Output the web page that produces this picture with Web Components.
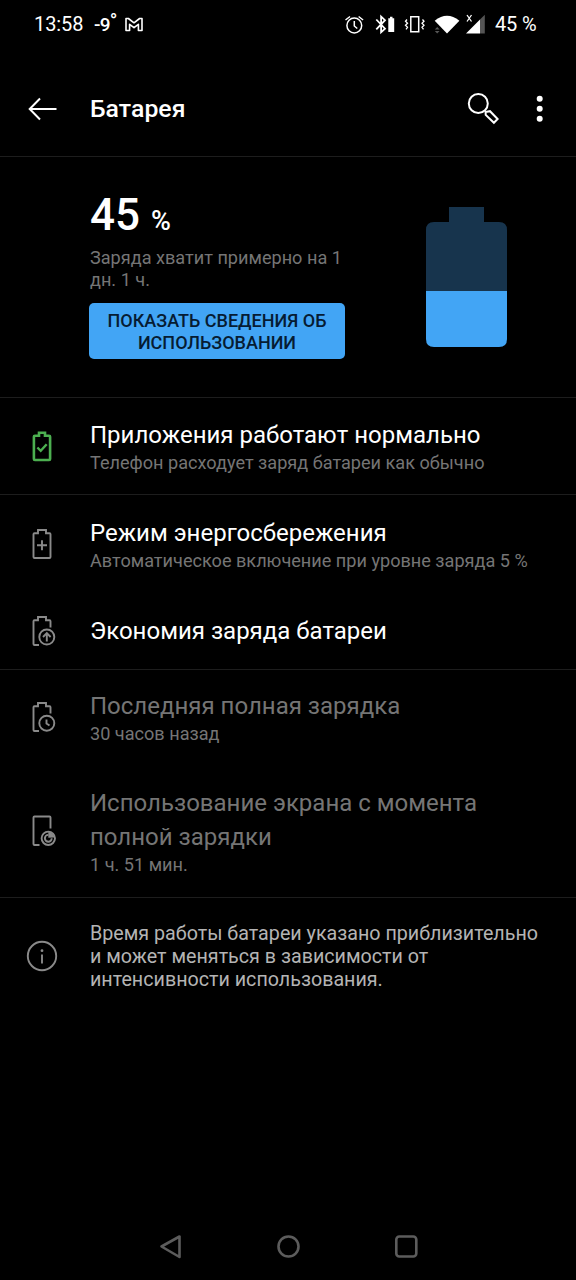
<!DOCTYPE html>
<html lang="ru"><head><meta charset="utf-8"><title>Батарея</title>
<style>
html,body{margin:0;background:#000}
body{font-family:Roboto,"Noto Sans",sans-serif;color:#fff}
</style></head><body>
<battery-screen></battery-screen>
<script>
const make=(name,css,html)=>customElements.define(name,class extends HTMLElement{
  constructor(){super();this.attachShadow({mode:'open'}).innerHTML=`<style>*{box-sizing:border-box}svg{display:block;overflow:visible}${css}</style>${html}`}
});
make('status-bar',`:host{display:flex;align-items:center;height:50px;padding:0 40px 2px 34px;font-size:20px;line-height:24px;white-space:nowrap;box-sizing:border-box}
.time{width:60px;letter-spacing:-.1px}.temp{width:30px;font-weight:500;font-size:19px;padding-top:2px;letter-spacing:-.8px}.temp sup{font-size:20px;line-height:0;vertical-align:3px}.sp{flex:1}.pct{width:41px;letter-spacing:-.15px}`,
`<span class="time">13:58</span><span class="temp">-9<sup>°</sup></span>
<svg width="20" height="16" viewBox="124 16 20 16" fill="none" stroke="#fff" stroke-width="1.6" stroke-linejoin="round"><path d="M126 18.5v12h3.6v-6.2l4.4 3.4 4.4-3.4v6.2h3.6v-12h-2.4l-5.6 4.3-5.6-4.3z"/></svg>
<span class="sp"></span>
<svg width="150" height="24" viewBox="345 12.500 150 24" fill="none" stroke="#fff" stroke-width="1.5">
<circle cx="354.300" cy="26" r="7.400"/><path d="M354.300 21.500v5l3 2.500M345.500 20.500l4.500-3.500M363.100 20.500l-4.500-3.500"/>
<path stroke-width="1.800" d="M376.300 20l8.700 9.200-3.900 3.600V17l3.900 3.700-8.700 9.200"/><path fill="#fff" stroke="none" d="M388.300 18.800h1.700v-1.600h2.500v1.600h1.700v13.600h-5.900z"/>
<path d="M410.800 17.200h7.900v15h-7.900z"/><path stroke-width="1.300" d="M407 20l-1.500 1.800 2 2-2 2 2 2-1.500 2M422.500 20l1.500 1.800-2 2 2 2-2 2 1.500 2"/>
<path fill="#fff" stroke="none" d="M434.700 21.200Q447 11.200 459.400 21.200L447 34z"/><path fill="#555" stroke="none" d="M434.800 30l2.400-2.500 2.400 2.500zM434.800 31.500l2.400 2.500 2.400-2.500z"/>
<path fill="#fff" stroke="none" d="M466 34l14-14v14z"/><path fill="#555" stroke="none" d="M480 20l4.800-4.800V34H480z"/><path stroke-width="1.300" d="M467 15.500l4.500 6.500M471.500 15.500l-4.500 6.500"/></svg><span class="pct">45 %</span>`);
make('app-bar',`:host{display:flex;align-items:center;height:107px;padding-top:12px;border-bottom:1px solid #1d1d1d;box-sizing:border-box}
.back{width:90px;padding-left:28px}h1{flex:1;margin:0;font-size:24.800px;letter-spacing:.03px;font-weight:500;line-height:32px}.find{width:61px}.more{width:47px}`,
`<div class="back"><svg width="30" height="24" viewBox="28 96.500 30 24" fill="none" stroke="#fff" stroke-width="2"><path d="M56.500 108.500H30M40 98L29.700 108.500 40 119"/></svg></div><h1><slot></slot></h1>
<div class="find"><svg width="32" height="32" viewBox="468 92.500 32 32" fill="none" stroke="#fff" stroke-width="2"><circle cx="478.300" cy="103" r="9.500"/><path d="M485.600 111.500l4.400-.8 7.600 7.800-3.700 3.800-8.200-7.900z"/></svg></div>
<div class="more"><svg width="20" height="30" viewBox="529 94 20 30" fill="#fff"><circle cx="539.700" cy="98.700" r="3"/><circle cx="539.700" cy="108.700" r="3"/><circle cx="539.700" cy="118.700" r="3"/></svg></div>`);
make('battery-summary',`:host{display:flex;height:241px;border-bottom:1px solid #1d1d1d;box-sizing:border-box;padding:32px 69px 0 89px;justify-content:space-between}
.info{width:256px}.level{height:52px;line-height:52px;font-size:44px;font-weight:500;padding-left:1px}.level small{font-size:27px}
p{margin:6px 0 0;padding-left:1px;color:#757575;font-size:18.120px;line-height:21.500px;width:256px;white-space:nowrap}
button{margin-top:13px;width:256px;height:56px;padding:1.500px 0 0;border:0;border-radius:5px;background:#42a5f5;color:#061c33;font:500 18px/21.500px Roboto,sans-serif;display:block}
svg{margin-top:18px}`,
`<div class="info"><div class="level"><span>45</span> <small>%</small></div><p>Заряда хватит примерно на 1<br>дн. 1 ч.</p><button>ПОКАЗАТЬ СВЕДЕНИЯ ОБ<br>ИСПОЛЬЗОВАНИИ</button></div>
<svg width="81" height="140" viewBox="0 0 81 140"><path fill="#17344d" d="M23 0h35v15h15q8 0 8 8v61H0V23q0-8 8-8h15z"/><path fill="#42a5f5" d="M0 84h81v48q0 8-8 8H8q-8 0-8-8z"/></svg>`);
const body='M13 32H8.500q-1 0-1-1V8.200q0-1 1-1H12V4h8v3.200h3.500q1 0 1 1v6.300';
const icons={
ok:'<g stroke="#4caf50" stroke-width="2.600"><path d="M8.900 7.800H13V4.800h6v3h4.100q1 0 1 1V31q0 1-1 1H8.900q-1 0-1-1V8.800q0-1 1-1z"/><path d="M11.400 19.500l3.300 3.300 6-6.500" stroke-width="2.400"/></g>',
plus:'<path d="M8.500 7.200H12V4h8v3.200h3.500q1 0 1 1V31q0 1-1 1h-15q-1 0-1-1V8.200q0-1 1-1zM11 19.300h10M16 14.300v10"/>',
up:`<path d="${body}"/><circle cx="20.800" cy="24" r="7.500"/><path d="M20.800 28.500v-8M17 24l3.800-3.800 3.800 3.800"/>`,
clock:`<path d="${body}"/><circle cx="20.800" cy="24.200" r="7.500"/><path d="M20.500 20.500v4l3 2"/>`,
screen:'<path d="M13.500 32h-5q-1 0-1-1V4.500q0-1 1-1h15q1 0 1 1v11"/><circle cx="22.300" cy="25.300" r="6.700"/><path d="M22.300 21.900a3.400 3.400 0 1 0 3.400 3.400"/><path fill="#8a8a8a" stroke="none" d="M22.300 19v5.800l6.200-.3q-1-5-6.200-5.500z"/>',
info:'<circle cx="16" cy="17" r="14.200"/><path d="M16 15.500v9"/><circle cx="16" cy="11.700" r="1.400" fill="#8a8a8a" stroke="none"/>'};
customElements.define('battery-icon',class extends HTMLElement{
  constructor(){super();this.attachShadow({mode:'open'})}
  connectedCallback(){this.shadowRoot.innerHTML=`<style>:host{display:block;width:32px;height:36px}svg{display:block}</style><svg width="32" height="36" viewBox="0 0 32 36" fill="none" stroke="#8a8a8a" stroke-width="1.900">${icons[this.getAttribute('name')]}</svg>`}
});
make('setting-row',`:host{display:grid;grid-template-columns:64px 1fr;align-items:center;padding-left:26px;height:var(--h,96px);box-sizing:border-box;border-bottom:var(--line,0) solid #1d1d1d}
.t{font-size:24px;line-height:34px;color:var(--tone,#fff);white-space:nowrap}::slotted([slot=sub]){display:block;font-size:18.120px;line-height:22px;color:#757575;white-space:nowrap}`,
`<slot name="icon"></slot><div><div class="t"><slot></slot></div><slot name="sub"></slot></div>`);
make('info-note',`:host{display:grid;grid-template-columns:64px 1fr;align-items:center;padding:24px 0 0 26px;font-size:19.690px;line-height:23px;color:#b4b4b4}`,
`<battery-icon name="info"></battery-icon><div><slot></slot></div>`);
make('nav-bar',`:host{display:flex;justify-content:space-between;padding:0 157px 18px 158px;margin-top:auto}`,
`<svg width="26" height="30" viewBox="158 1232 26 30" fill="none" stroke="#5c5c5c" stroke-width="2.600" stroke-linejoin="round"><path d="M161.500 1246.500l18-10v20.500z"/></svg>
<svg width="26" height="30" viewBox="275.500 1232 26 30" fill="none" stroke="#5c5c5c" stroke-width="2.600"><circle cx="288" cy="1246.500" r="10"/></svg>
<svg width="26" height="30" viewBox="393 1232 26 30" fill="none" stroke="#5c5c5c" stroke-width="2.600"><rect x="396.300" y="1236.500" width="20" height="20" rx="3"/></svg>`);
make('battery-screen',`:host{display:flex;flex-direction:column;width:576px;height:1280px;background:#000;overflow:hidden}`,
`<status-bar></status-bar><app-bar>Батарея</app-bar><battery-summary></battery-summary>
<setting-row style="--h:97px;--line:1px"><battery-icon slot="icon" name="ok"></battery-icon>Приложения работают нормально<span slot="sub">Телефон расходует заряд батареи как обычно</span></setting-row>
<setting-row style="--h:98px"><battery-icon slot="icon" name="plus"></battery-icon>Режим энергосбережения<span slot="sub">Автоматическое включение при уровне заряда 5 %</span></setting-row>
<setting-row style="--h:77px;--line:1px"><battery-icon slot="icon" name="up"></battery-icon>Экономия заряда батареи</setting-row>
<setting-row style="--h:94px;--tone:#757575"><battery-icon slot="icon" name="clock"></battery-icon>Последняя полная зарядка<span slot="sub">30 часов назад</span></setting-row>
<setting-row style="--h:134px;--line:1px;--tone:#757575"><battery-icon slot="icon" name="screen"></battery-icon>Использование экрана с момента<br>полной зарядки<span slot="sub">1 ч. 51 мин.</span></setting-row>
<info-note>Время работы батареи указано приблизительно<br>и может меняться в зависимости от<br>интенсивности использования.</info-note><nav-bar></nav-bar>`);
</script></body></html>
